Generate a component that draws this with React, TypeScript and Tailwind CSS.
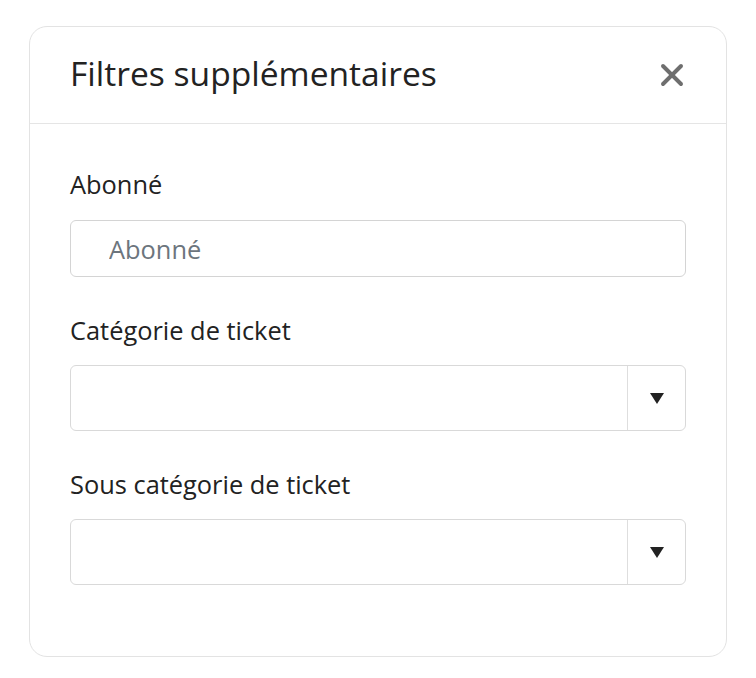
import { X } from 'lucide-react';

function SelectBox() {
    return (
        <div className="flex h-[66px] w-full rounded-md border border-[#d9d9d9] bg-white">
            <div className="flex-1" />
            <div className="flex w-[58px] items-center justify-center border-l border-[#dedede]">
                <svg width="14" height="11" viewBox="0 0 14 11">
                    <path d="M0 0 H14 L7 11 Z" fill="#222" />
                </svg>
            </div>
        </div>
    );
}

export default function App() {
    return (
        <div className="min-h-screen bg-white pt-[26px] pl-[29px] font-['Open_Sans',sans-serif]">
            <div className="w-[698px] h-[631px] rounded-[18px] border border-[#e3e3e3] bg-white">
                <div className="flex h-[97px] items-center justify-between border-b border-[#e5e5e5] pl-[40px] pr-[36px]">
                    <h2 className="text-[33.6px] text-[#222] pb-[4px]">Filtres supplémentaires</h2>
                    <X className="w-[36px] h-[36px] text-[#6e6e6e]" strokeWidth={2.6} />
                </div>

                <div className="px-[40px] pt-[45px]">
                    <label className="block text-[25.4px] leading-[30px] text-[#222]">Abonné</label>
                    <input
                        className="mt-[21px] h-[57px] w-full rounded-md border border-[#d4d4d4] pl-[38px] text-[25.4px] text-[#333] outline-none placeholder:text-[#6c757d]"
                        placeholder="Abonné"
                    />

                    <label className="mt-[38px] block text-[25.4px] leading-[30px] text-[#222]">Catégorie de ticket</label>
                    <div className="mt-[20px]">
                        <SelectBox />
                    </div>

                    <label className="mt-[38px] block text-[25.4px] leading-[30px] text-[#222]">Sous catégorie de ticket</label>
                    <div className="mt-[20px]">
                        <SelectBox />
                    </div>
                </div>
            </div>
        </div>
    );
}
